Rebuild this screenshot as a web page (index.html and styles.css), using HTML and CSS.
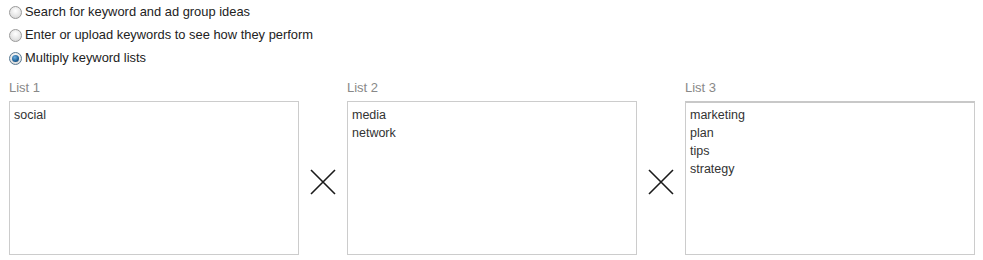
FILE: index.html
```html
<!DOCTYPE html>
<html>
<head>
<meta charset="utf-8">
<link rel="stylesheet" href="styles.css">
</head>
<body>
<div class="page">
  <div class="options">
    <label class="option"><span class="radio"></span><span class="opt-text">Search for keyword and ad group ideas</span></label>
    <label class="option"><span class="radio"></span><span class="opt-text">Enter or upload keywords to see how they perform</span></label>
    <label class="option"><span class="radio checked"></span><span class="opt-text">Multiply keyword lists</span></label>
  </div>
  <div class="lists">
    <div class="list">
      <div class="list-label">List 1</div>
      <div class="box"><div class="kw">social</div></div>
    </div>
    <div class="times">
      <svg width="26" height="26" viewBox="0 0 26 26"><path d="M1 1 L25 25 M25 1 L1 25" stroke="#1a1a1a" stroke-width="1.6" fill="none"/></svg>
    </div>
    <div class="list">
      <div class="list-label">List 2</div>
      <div class="box"><div class="kw">media</div><div class="kw">network</div></div>
    </div>
    <div class="times">
      <svg width="26" height="26" viewBox="0 0 26 26"><path d="M1 1 L25 25 M25 1 L1 25" stroke="#1a1a1a" stroke-width="1.6" fill="none"/></svg>
    </div>
    <div class="list">
      <div class="list-label">List 3</div>
      <div class="box focus"><div class="kw">marketing</div><div class="kw">plan</div><div class="kw">tips</div><div class="kw">strategy</div></div>
    </div>
  </div>
</div>
</body>
</html>
```

FILE: styles.css
```css
html, body {
  margin: 0;
  padding: 0;
  background: #fff;
}
.page {
  padding: 1px 0 0 9px;
  font-family: "Liberation Sans", Arial, sans-serif;
  font-size: 13px;
  color: #222;
}
.options {
  display: flex;
  flex-direction: column;
  gap: 0.5px;
}
.option {
  display: flex;
  align-items: center;
  height: 22.5px;
}
.radio {
  box-sizing: border-box;
  width: 13px;
  height: 13px;
  border-radius: 50%;
  border: 1px solid #9a9a9a;
  background: radial-gradient(circle at 50% 35%, #ffffff 0%, #e6e6e6 55%, #cfcfcf 100%);
  margin: 0 3px 0 0;
  display: flex;
  align-items: center;
  justify-content: center;
}
.radio.checked {
  border-color: #5a7a92;
}
.radio.checked::after {
  content: "";
  width: 7px;
  height: 7px;
  border-radius: 50%;
  background: radial-gradient(circle at 40% 35%, #6fb0e0 0%, #1d5f96 60%, #173f63 100%);
}
.opt-text {
  line-height: 16px;
  font-size: 12.9px;
}
.lists {
  display: flex;
  margin-top: 10px;
}
.list {
  width: 290px;
  display: flex;
  flex-direction: column;
}
.list-label {
  color: #888;
  line-height: 16px;
  margin-bottom: 5px;
}
.box {
  box-sizing: border-box;
  height: 154px;
  border: 1px solid #ccc;
  padding: 4px 4px;
  color: #333;
  font-size: 12.5px;
}
.box.focus {
  border-top: 2px solid #c8c8c8;
  padding-top: 3px;
}
.kw {
  line-height: 18px;
}
.times {
  width: 48px;
  display: flex;
  justify-content: center;
  padding-top: 89px;
  box-sizing: border-box;
}
```
